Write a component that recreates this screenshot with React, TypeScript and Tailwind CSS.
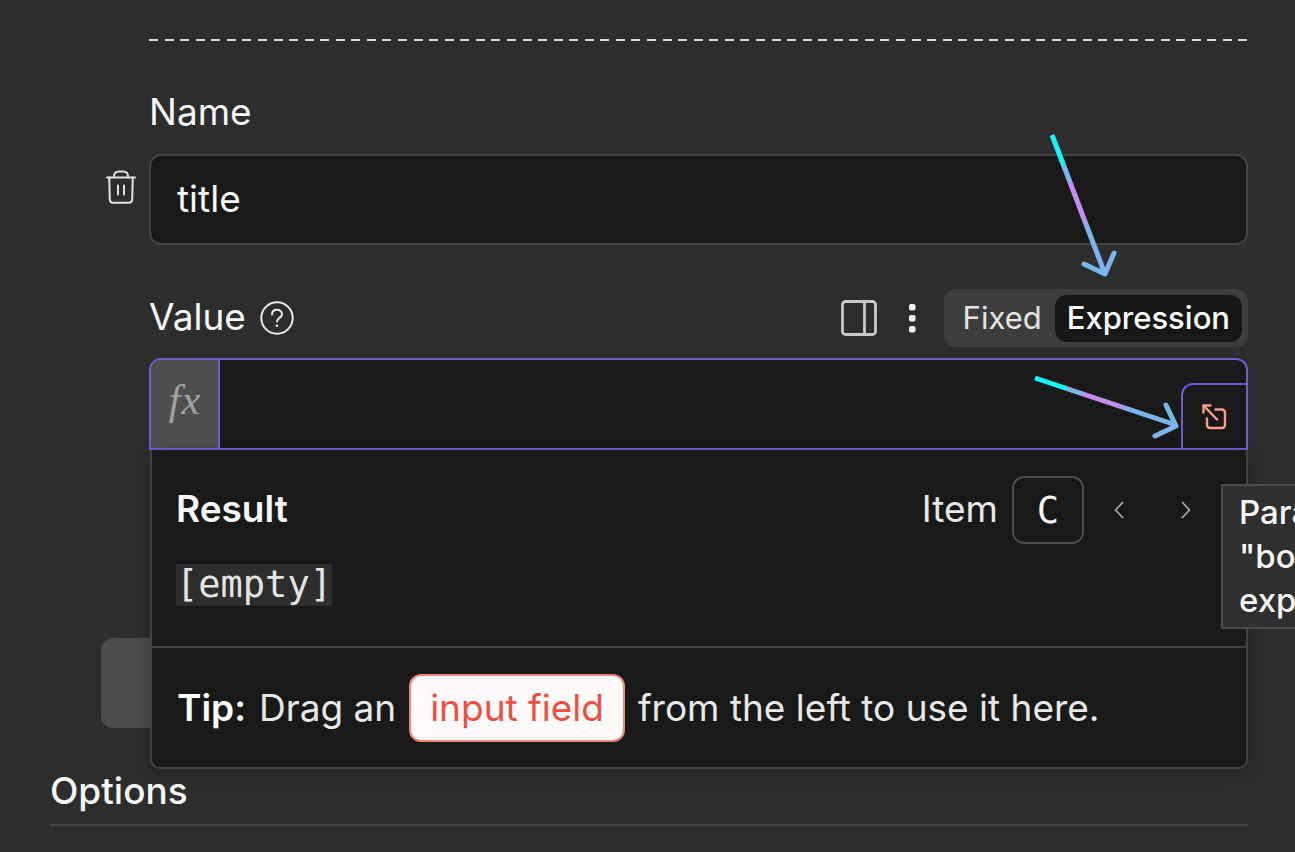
import { useState } from 'react'

const DASHES = Array.from({ length: 71 }, (_, i) => i)

function DashedDivider() {
  return (
    <div className="ml-[99px] flex h-[2px] justify-between">
      {DASHES.map((i) => (
        <span key={i} className="w-[9px] bg-[#dcdcdc]" />
      ))}
    </div>
  )
}

function TrashIcon() {
  return (
    <svg width="30" height="34" viewBox="0 0 30 34" fill="none" stroke="#e2e2e2" strokeWidth="2" strokeLinecap="round" strokeLinejoin="round">
      <path d="M1 7.500h28" />
      <path d="M8 7.500V6.500C8 3.500 10 1.500 13 1.500h4c3 0 5 2 5 5v1" />
      <path d="M3.200 7.500l.6 22a3.500 3.500 0 0 0 3.500 3.300h15.400a3.500 3.500 0 0 0 3.500-3.300l.6-22" />
      <path d="M12 15.500v9M18 15.500v9" />
    </svg>
  )
}

function HelpIcon() {
  return (
    <svg width="34" height="34" viewBox="0 0 34 34" fill="none" stroke="#ececec" strokeWidth="2" strokeLinecap="round">
      <circle cx="17" cy="17" r="15.700" />
      <path d="M12 13.500c0-3 2.200-4.700 5-4.700s5 1.800 5 4.500c0 3.700-5 3.500-5 7.200" />
      <circle cx="17" cy="24.800" r="1.300" fill="#ececec" stroke="none" />
    </svg>
  )
}

function PanelIcon() {
  return (
    <svg width="36" height="36" viewBox="0 0 36 36" fill="none" stroke="#c9c9c9" strokeWidth="2.800">
      <rect x="1.500" y="1.500" width="33" height="33" rx="3" />
      <path d="M23.500 2v32" />
    </svg>
  )
}

function DotsIcon() {
  return (
    <svg width="8" height="30" viewBox="0 0 8 30" fill="#f4f4f4">
      <rect x="1" y="1" width="6.500" height="6.500" rx="2" />
      <rect x="1" y="12" width="6.500" height="6.500" rx="2" />
      <rect x="1" y="23" width="6.500" height="6.500" rx="2" />
    </svg>
  )
}

function ExpandIcon() {
  return (
    <svg width="26" height="26" viewBox="0 0 26 26" fill="none" stroke="#f59c8e" strokeWidth="2.400" strokeLinecap="round" strokeLinejoin="round">
      <path d="M1.500 8.500v-7h7" />
      <path d="M1.500 1.500l13.500 14" />
      <path d="M13.500 5.500h6.500a3 3 0 0 1 3 3v12.500a3 3 0 0 1-3 3h-12a3 3 0 0 1-3-3v-6.500" />
    </svg>
  )
}

function Chevron({ d }: { d: string }) {
  return (
    <svg width="10" height="18" viewBox="0 0 10 18" fill="none" stroke="#b4b4b4" strokeWidth="1.500">
      <path d={d} />
    </svg>
  )
}

function Arrows() {
  return (
    <svg className="pointer-events-none absolute top-0 right-0 z-20" width="295" height="460" viewBox="1000 0 295 460" fill="none" strokeWidth="5">
      <defs>
        <linearGradient id="down" gradientUnits="userSpaceOnUse" x1="1052" y1="135" x2="1105" y2="274">
          <stop offset="0.210" stopColor="#16f4f7" />
          <stop offset="0.230" stopColor="#7cb5ea" />
          <stop offset="0.330" stopColor="#7cb5ea" />
          <stop offset="0.350" stopColor="#c48df0" />
          <stop offset="0.600" stopColor="#c48df0" />
          <stop offset="0.660" stopColor="#7cb5ea" />
        </linearGradient>
        <linearGradient id="across" gradientUnits="userSpaceOnUse" x1="1035" y1="378" x2="1176" y2="426">
          <stop offset="0.210" stopColor="#16f4f7" />
          <stop offset="0.230" stopColor="#7cb5ea" />
          <stop offset="0.330" stopColor="#7cb5ea" />
          <stop offset="0.350" stopColor="#c48df0" />
          <stop offset="0.600" stopColor="#c48df0" />
          <stop offset="0.660" stopColor="#7cb5ea" />
        </linearGradient>
      </defs>
      <path d="M1052 135L1105 274" stroke="url(#down)" />
      <path d="M1084 264L1105 274L1114 253" stroke="#7cb5ea" strokeLinecap="round" strokeLinejoin="round" />
      <path d="M1035 378L1176 425" stroke="url(#across)" />
      <path d="M1166 405L1176 426L1155 436" stroke="#7cb5ea" strokeLinecap="round" strokeLinejoin="round" />
    </svg>
  )
}

function ResultPanel() {
  return (
    <div className="absolute top-full right-0 left-px z-10 rounded-b-[10px] border-2 border-t-0 border-[#414141] bg-[#191919] shadow-[0_4px_16px_rgba(0,0,0,0.25)]">
      <div className="h-[198px] border-b-2 border-[#414141] px-6 pt-[26px]">
        <div className="flex items-center">
          <h2 className="flex-1 pb-[2px] text-[37px] leading-12 font-semibold">Result</h2>
          <label htmlFor="item" className="mr-[14px] pb-[2px] text-[37px] leading-12 text-[#e8e8e8]">Item</label>
          <input
            id="item"
            defaultValue="C"
            className="h-[68px] w-[72px] rounded-xl border-2 border-[#4c4c4c] bg-transparent text-center font-['DejaVu_Sans_Mono',monospace] text-[37px] outline-none"
          />
          <button aria-label="Previous item" className="ml-[30px]">
            <Chevron d="M9 1L1.500 9L9 17" />
          </button>
          <button aria-label="Next item" className="mr-[31px] ml-[57px]">
            <Chevron d="M1 1L8.500 9L1 17" />
          </button>
        </div>
        <div className="mt-5 flex">
          <span className="bg-[#2d2d2d] font-['DejaVu_Sans_Mono',monospace] text-[37px] leading-[42px] text-[#e4e4e4]">[empty]</span>
        </div>
      </div>
      <p className="flex h-[119px] items-center px-[25px] text-[37px] leading-12 whitespace-nowrap text-[#e8e8e8]">
        <strong className="mr-[13px] font-semibold text-white">Tip:</strong>
        Drag an
        <span className="mx-[13px] flex h-[68px] items-center rounded-xl border-2 border-[#ee8378] bg-[#fffafa] px-[19px] text-[#ee4f43]">input field</span>
        from the left to use it here.
      </p>
      <div role="tooltip" className="absolute top-[34px] -right-[60px] h-[145px] w-[85px] border-2 border-[#4a4a4a] bg-[#2f2f2f] py-1 pl-4 text-[33px] leading-11 font-medium whitespace-nowrap">
        Para
        <br />
        "bo
        <br />
        exp
      </div>
    </div>
  )
}

export default function App() {
  const [mode, setMode] = useState('Expression')

  return (
    <main className="relative min-h-screen overflow-hidden bg-[#2d2d2d] pt-[39px] pr-[47px] pl-[50px] font-['Inter',sans-serif] text-[#f7f7f7]">
      <DashedDivider />

      <div className="mt-12 flex">
        <div className="flex w-[99px] justify-end pt-[79px] pr-[13px]">
          <button aria-label="Delete field" className="h-[38px]">
            <TrashIcon />
          </button>
        </div>

        <div className="flex-1">
          <label htmlFor="name" className="block text-[37px] leading-[46px]">Name</label>
          <input
            id="name"
            defaultValue="title"
            className="mt-[19px] block h-[91px] w-full rounded-xl border-2 border-[#434343] bg-[#191919] px-[26px] pb-[2px] text-[37px] outline-none"
          />

          <div className="mt-11 flex h-[58px] items-center">
            <label htmlFor="value" className="pb-[2px] text-[37px] leading-12">Value</label>
            <span className="ml-[14px]">
              <HelpIcon />
            </span>
            <button aria-label="Open panel" className="ml-auto">
              <PanelIcon />
            </button>
            <button aria-label="More options" className="mr-7 ml-[31px]">
              <DotsIcon />
            </button>
            <div className="flex h-[58px] items-center rounded-xl bg-[#3d3d3d] p-[6px] text-[31px]">
              {['Fixed', 'Expression'].map((name) => (
                <button
                  key={name}
                  onClick={() => setMode(name)}
                  className={mode === name ? 'h-[47px] rounded-xl bg-[#171717] px-3 font-medium text-white' : 'h-[47px] px-[13px] text-[#e4e4e4]'}
                >
                  {name}
                </button>
              ))}
            </div>
          </div>

          <div className="relative mt-[11px]">
            <div className="flex h-[92px] overflow-hidden rounded-t-xl border-2 border-[#6a5fd0] bg-[#191919]">
              <div className="flex w-[69px] items-center justify-center gap-px border-r-2 border-[#6a5fd0] bg-[#4f4f4f] pb-2 font-['Liberation_Serif',serif] text-[42px] text-[#a3a3a3] italic">
                <span>f</span>
                <span>x</span>
              </div>
              <input id="value" aria-label="Value" className="min-w-0 flex-1 bg-transparent px-4 text-[37px] outline-none" />
              <button aria-label="Open expression editor" className="flex h-[65px] w-[65px] items-center justify-center self-end rounded-tl-xl border-t-2 border-l-2 border-[#6a5fd0]">
                <ExpandIcon />
              </button>
            </div>
            <ResultPanel />
          </div>
        </div>
      </div>

      <button aria-label="Add field" className="mt-[188px] ml-[51px] block h-[90px] w-[1000px] max-w-[80%] rounded-xl bg-[#4c4c4c]" />

      <h2 className="mt-[39px] border-b-2 border-[#424242] pb-[9px] text-[37px] leading-12 font-medium">Options</h2>
      <Arrows />
    </main>
  )
}
